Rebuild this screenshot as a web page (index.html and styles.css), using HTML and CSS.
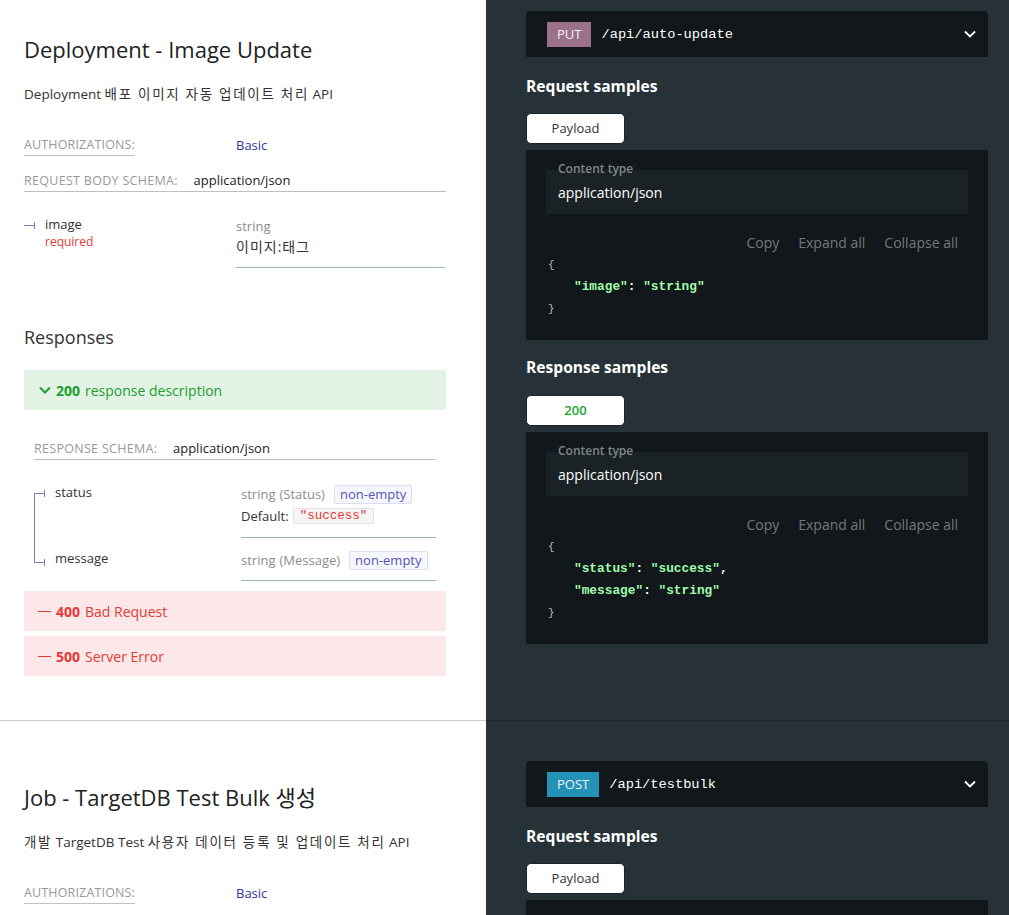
FILE: index.html
```html
<!DOCTYPE html>
<html lang="ko">
<head>
<meta charset="utf-8">
<title>API Reference</title>
<link rel="stylesheet" href="styles.css">
</head>
<body>
<div class="page">

  <section class="op">
    <div class="left">
      <h2 class="op-title">Deployment - Image Update</h2>
      <p class="op-desc">Deployment <span class="ko">배포 이미지 자동 업데이트 처리</span> API</p>
      <div class="auth">
        <span class="auth-label">AUTHORIZATIONS:</span>
        <span class="auth-value">Basic</span>
      </div>
      <div class="schema-head">
        <span class="schema-label">REQUEST BODY SCHEMA:</span>
        <span class="schema-type">application/json</span>
      </div>
      <div class="props props-req">
        <div class="prop first last">
          <div class="prop-name">
            <span class="name">image</span>
            <span class="required">required</span>
          </div>
          <div class="prop-detail">
            <div class="type">string</div>
            <div class="prop-desc">이미지:태그</div>
          </div>
        </div>
      </div>

      <h3 class="responses-title">Responses</h3>
      <div class="resp resp-ok">
        <svg class="resp-chev" width="12" height="8" viewBox="0 0 12 8"><polyline points="1,1.5 6,6.5 11,1.5" fill="none" stroke="currentColor" stroke-width="2"/></svg>
        <strong>200</strong><span>response description</span>
      </div>
      <div class="resp-body">
        <div class="schema-head schema-head-resp">
          <span class="schema-label">RESPONSE SCHEMA:</span>
          <span class="schema-type">application/json</span>
        </div>
        <div class="props props-resp">
          <div class="prop first">
            <div class="prop-name"><span class="name">status</span></div>
            <div class="prop-detail">
              <div class="type-line"><span class="type">string</span> <span class="type">(Status)</span><span class="badge">non-empty</span></div>
              <div class="default-line"><span class="default-label">Default:</span><span class="default-val">"success"</span></div>
            </div>
          </div>
          <div class="prop last">
            <div class="prop-name"><span class="name">message</span></div>
            <div class="prop-detail">
              <div class="type-line"><span class="type">string</span> <span class="type">(Message)</span><span class="badge">non-empty</span></div>
            </div>
          </div>
        </div>
      </div>
      <div class="resp resp-err"><span class="dash"></span><strong>400</strong><span>Bad Request</span></div>
      <div class="resp resp-err resp-err2"><span class="dash"></span><strong>500</strong><span>Server Error</span></div>
    </div>

    <div class="right">
      <div class="endpoint">
        <span class="method put">PUT</span>
        <span class="path">/api/auto-update</span>
        <svg class="end-chev" width="12" height="8" viewBox="0 0 12 8"><polyline points="1,1.5 6,6.5 11,1.5" fill="none" stroke="#fff" stroke-width="1.8"/></svg>
      </div>
      <h3 class="samples-title">Request samples</h3>
      <div class="tabs"><span class="tab">Payload</span></div>
      <div class="panel">
        <div class="ctype">
          <span class="ctype-label">Content type</span>
          <span class="ctype-value">application/json</span>
        </div>
        <div class="tools"><span>Copy</span><span>Expand all</span><span>Collapse all</span></div>
        <div class="code">
          <div class="punc">{</div>
          <div class="ind"><span class="str">"image"</span><span class="colon">: </span><span class="str">"string"</span></div>
          <div class="punc">}</div>
        </div>
      </div>
      <h3 class="samples-title samples-resp">Response samples</h3>
      <div class="tabs tabs-resp"><span class="tab tab-ok">200</span></div>
      <div class="panel">
        <div class="ctype">
          <span class="ctype-label">Content type</span>
          <span class="ctype-value">application/json</span>
        </div>
        <div class="tools"><span>Copy</span><span>Expand all</span><span>Collapse all</span></div>
        <div class="code">
          <div class="punc">{</div>
          <div class="ind"><span class="str">"status"</span><span class="colon">: </span><span class="str">"success"</span><span class="colon">,</span></div>
          <div class="ind"><span class="str">"message"</span><span class="colon">: </span><span class="str">"string"</span></div>
          <div class="punc">}</div>
        </div>
      </div>
    </div>
  </section>

  <section class="op">
    <div class="left">
      <h2 class="op-title op-title2">Job - TargetDB Test Bulk 생성</h2>
      <p class="op-desc"><span class="ko">개발</span> TargetDB Test <span class="ko">사용자 데이터 등록 및 업데이트 처리</span> API</p>
      <div class="auth">
        <span class="auth-label">AUTHORIZATIONS:</span>
        <span class="auth-value">Basic</span>
      </div>
    </div>
    <div class="right">
      <div class="endpoint">
        <span class="method post">POST</span>
        <span class="path">/api/testbulk</span>
        <svg class="end-chev" width="12" height="8" viewBox="0 0 12 8"><polyline points="1,1.5 6,6.5 11,1.5" fill="none" stroke="#fff" stroke-width="1.8"/></svg>
      </div>
      <h3 class="samples-title">Request samples</h3>
      <div class="tabs"><span class="tab">Payload</span></div>
      <div class="panel panel-tail"></div>
    </div>
  </section>

</div>
</body>
</html>
```

FILE: styles.css
```css
* { box-sizing: border-box; }

html, body {
  margin: 0;
  padding: 0;
  background: #ffffff;
  overflow: hidden;
}

body {
  font-family: "Open Sans", "Noto Sans CJK KR", sans-serif;
  font-size: 14px;
  color: #333333;
}

.page {
  margin-top: -29px;
}

.op {
  display: flex;
}

.left {
  width: 486px;
  flex: none;
  padding: 40px 40px 44px 24px;
  background: #ffffff;
  border-bottom: 1px solid #cccccc;
}

.right {
  flex: 1;
  padding: 40px 21px 0 40px;
  background: #263238;
  color: #ffffff;
  border-bottom: 1px solid #1e282c;
}

/* ---------- left column ---------- */

.op-title {
  margin: 23px 0 0;
  font-size: 22px;
  line-height: 30px;
  font-weight: 400;
  color: #222222;
}

.op-title2 { margin-top: 21px; }

.op-desc {
  margin: 20px 0 0;
  font-size: 13.5px;
  line-height: 20px;
  color: #333333;
}

.ko {
  letter-spacing: 1.7px;
}

.auth {
  display: grid;
  grid-template-columns: 212px 1fr;
  margin-top: 31px;
  line-height: 20px;
}

.auth-label {
  justify-self: start;
  font-size: 12.5px;
  letter-spacing: 0.15px;
  color: #999999;
  border-bottom: 1px solid #b9c3c9;
}

.auth-value {
  font-size: 13px;
  color: #32329f;
}

.schema-head {
  margin-top: 14px;
  line-height: 20px;
  border-bottom: 1px solid #b9c0c6;
}

.schema-label {
  font-size: 12.5px;
  letter-spacing: 0.3px;
  color: #999999;
  margin-right: 12px;
}

.schema-type {
  font-size: 13px;
  color: #222222;
}

.props-req {
  margin-top: 12px;
}

.prop {
  display: grid;
}

.props-req .prop { grid-template-columns: 212px 1fr; }
.props-resp .prop { grid-template-columns: 207px 1fr; }

.prop-name {
  position: relative;
  padding: 10px 0 10px 21px;
  line-height: 20px;
  font-size: 13px;
  color: #333333;
  display: flex;
  flex-direction: column;
  align-items: flex-start;
  background-image: linear-gradient(#7c7cbb, #7c7cbb);
  background-repeat: no-repeat;
  background-size: 1px 100%;
  background-position: 0 0;
}

.prop.first .prop-name {
  background-position: 0 21px;
}

.prop.last .prop-name {
  background-size: 1px 22px;
}

.prop.first.last .prop-name {
  background-image: none;
}

.prop-name::before {
  content: "";
  position: absolute;
  left: 0;
  top: 21px;
  width: 10px;
  height: 1px;
  background: #7c7cbb;
}

.prop-name::after {
  content: "";
  position: absolute;
  left: 10px;
  top: 18px;
  width: 1px;
  height: 7px;
  background: #7c7cbb;
}

.props-resp .prop.last .prop-name::before { top: 24px; }
.props-resp .prop.last .prop-name::after { top: 21px; }
.props-resp .prop.last .prop-name { background-size: 1px 25px; }

.required {
  font-size: 12px;
  line-height: 16px;
  color: #e53935;
}

.prop-detail {
  padding: 12px 0 10px;
  border-bottom: 1px solid #9fb4be;
  line-height: 20px;
}

.props-req .prop-detail { margin-right: 1px; }

.type {
  font-size: 13px;
  color: #8c8c8c;
}

.prop-desc {
  margin-top: 1px;
  font-size: 14px;
  letter-spacing: 1px;
  color: #333333;
}

.type-line {
  display: flex;
  align-items: center;
  gap: 4px;
  height: 20px;
}

.badge {
  margin-left: 5px;
  padding: 0 5px;
  line-height: 17px;
  font-size: 13px;
  color: #5755b3;
  background: #f6f6fd;
  border: 1px solid #dcdcf2;
  border-radius: 2px;
}

.default-line {
  display: flex;
  align-items: center;
  gap: 4px;
  height: 22px;
  margin-top: 1px;
}

.default-label {
  font-size: 13px;
  color: #333333;
}

.default-val {
  font-family: "Liberation Mono", "Courier New", monospace;
  font-size: 12.5px;
  line-height: 14px;
  padding: 0 6px;
  color: #e53935;
  background: #f5f5f5;
  border: 1px solid #e2e2e2;
  border-radius: 2px;
}

.responses-title {
  margin: 56px 0 0;
  font-size: 18px;
  line-height: 26px;
  font-weight: 400;
  color: #333333;
}

.resp {
  display: flex;
  align-items: center;
  height: 40px;
  padding: 0 14px;
  border-radius: 2px;
  font-size: 14px;
}

.resp strong { font-weight: 700; margin-right: 5px; }

.resp-ok {
  margin-top: 20px;
  background: #e2f3e5;
  color: #1f9d2f;
}

.resp-chev {
  margin: 0 5px 0 1px;
  color: #1f9d2f;
}

.resp-body {
  padding: 28px 10px 0;
}

.schema-head-resp { margin-top: 0; }

.props-resp { margin-top: 12px; }

.resp-err {
  margin-top: 10px;
  background: #fce8e8;
  color: #e53935;
}

.resp-err2 { margin-top: 5px; }

.dash {
  display: inline-block;
  width: 13px;
  height: 1px;
  background: #e53935;
  margin-right: 5px;
}

/* ---------- right column ---------- */

.endpoint {
  display: flex;
  align-items: center;
  height: 46px;
  padding: 0 12px 0 21px;
  background: #11171a;
  border-radius: 4px 4px 0 0;
}

.method {
  height: 25px;
  line-height: 25px;
  padding: 0 10px;
  font-size: 13px;
  color: #f2f2f2;
}

.put { background: #9b718c; }
.post { background: #2492b6; }

.path {
  margin-left: 10px;
  flex: 1;
  font-family: "Liberation Mono", "Courier New", monospace;
  font-size: 13.7px;
  color: #ffffff;
}

.end-chev { flex: none; }

.samples-title {
  margin: 19px 0 0;
  font-size: 15.6px;
  line-height: 20px;
  font-weight: 700;
  color: #ffffff;
}

.samples-resp { margin-top: 17px; }

.tabs {
  display: flex;
  margin-top: 17px;
}

.tabs-resp { margin-top: 18px; }

.tab {
  width: 99px;
  height: 31px;
  line-height: 29px;
  text-align: center;
  font-size: 13px;
  color: #333333;
  background: #ffffff;
  border: 1px solid #1c2326;
  border-radius: 5px;
}

.tab-ok {
  color: #1aa22b;
  font-weight: 600;
}

.panel {
  margin-top: 6px;
  padding: 20px 20px 20px;
  background: #11171a;
}

.panel-tail {
  height: 40px;
}

.ctype {
  position: relative;
  padding: 13px 12px 11px;
  background: #1b2225;
}

.ctype-label {
  position: absolute;
  left: 12px;
  top: -10px;
  font-size: 12px;
  line-height: 18px;
  font-weight: 600;
  color: #80878b;
}

.ctype-value {
  display: block;
  font-size: 14px;
  line-height: 20px;
  color: #ffffff;
}

.tools {
  display: flex;
  justify-content: flex-end;
  gap: 19px;
  margin-top: 19px;
  padding-right: 10px;
  font-size: 14px;
  line-height: 20px;
  color: #74797c;
}

.code {
  margin-top: 1px;
  padding-left: 2px;
  font-family: "Liberation Mono", "Courier New", monospace;
  font-size: 12.8px;
  line-height: 22px;
  font-weight: 700;
}

.punc {
  color: #b9bcbe;
  font-weight: 400;
  font-size: 11px;
}

.ind {
  padding-left: 26px;
}

.str { color: #a0fbaa; }
.colon { color: #ffffff; }
```
